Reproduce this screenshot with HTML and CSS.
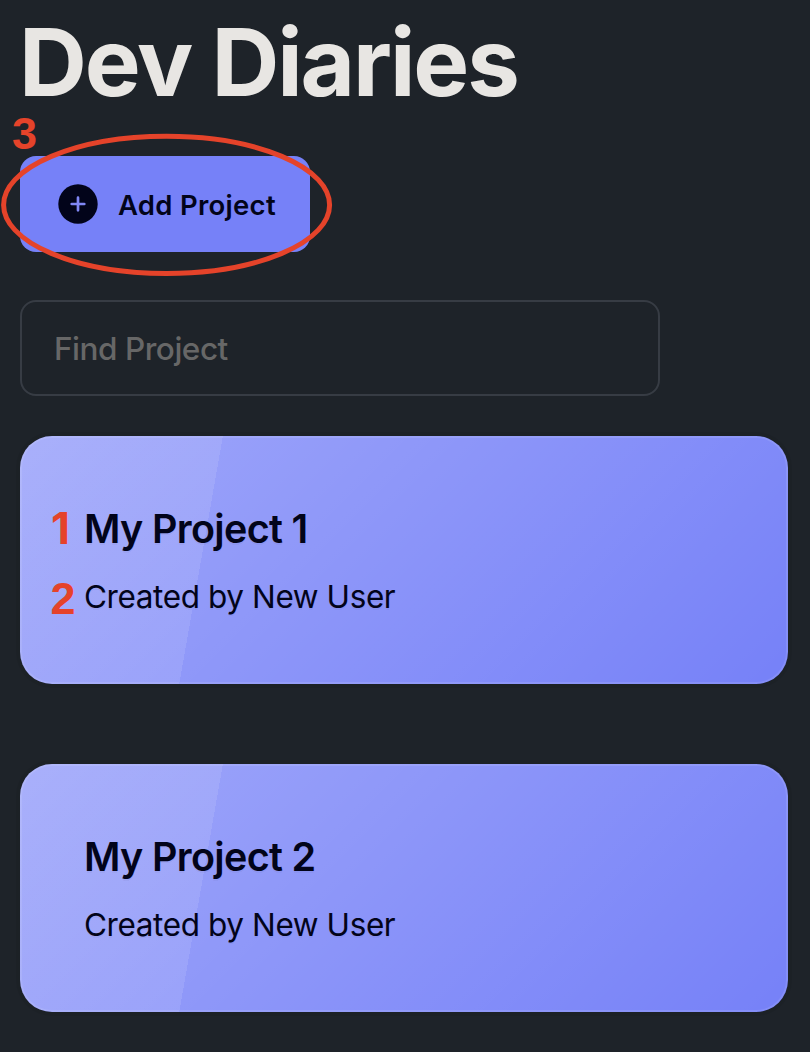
FILE: index.html
```html
<!DOCTYPE html>
<html lang="en">
<head>
<meta charset="utf-8">
<title>Dev Diaries</title>
<link rel="stylesheet" href="styles.css">
</head>
<body>
<main class="page">
  <h1 class="title">Dev Diaries</h1>
  <div class="actions">
    <button class="add-button" type="button">
      <svg class="add-icon" viewBox="0 0 40 40" aria-hidden="true">
        <circle cx="20" cy="20" r="19.7" fill="#02041a"/>
        <path d="M20 13.7v12.6M13.7 20h12.6" stroke="#8087f5" stroke-width="2.7" stroke-linecap="round"/>
      </svg>
      <span class="add-label">Add Project</span>
    </button>
    <span class="mark mark-three">3</span>
    <svg class="ring" viewBox="0 0 334 146" aria-hidden="true">
      <ellipse cx="166.6" cy="72.9" rx="163" ry="68.6" fill="none" stroke="#e5432a" stroke-width="5"/>
    </svg>
  </div>
  <input class="search" type="text" placeholder="Find Project">
  <section class="projects">
    <article class="card">
      <h2 class="card-title">My Project 1</h2>
      <p class="card-author">Created by New User</p>
      <span class="mark mark-one">1</span>
      <span class="mark mark-two">2</span>
    </article>
    <article class="card">
      <h2 class="card-title">My Project 2</h2>
      <p class="card-author">Created by New User</p>
    </article>
  </section>
</main>
</body>
</html>
```

FILE: styles.css
```css
* {
  box-sizing: border-box;
}

body {
  margin: 0;
  background: #1e2329;
  font-family: Inter, "Liberation Sans", sans-serif;
  color: #02041a;
}

.page {
  display: flex;
  flex-direction: column;
  align-items: flex-start;
  height: 1052px;
  padding: 14px 22px 0 20px;
  overflow: hidden;
}

.title {
  height: 142px;
  margin: 0 0 0 -1px;
  color: #e8e6e3;
  font-size: 94px;
  font-weight: 700;
  line-height: 96px;
  letter-spacing: -2.1px;
  white-space: nowrap;
}

.actions {
  position: relative;
  margin-bottom: 48px;
}

.add-button {
  display: flex;
  align-items: center;
  gap: 20px;
  width: 290px;
  height: 96px;
  padding: 0 0 0 38px;
  border: 0;
  border-radius: 16px;
  background: #7681f8;
  color: inherit;
  font-family: inherit;
}

.add-icon {
  flex: none;
  width: 40px;
  height: 40px;
}

.add-label {
  padding-top: 2px;
  font-size: 27.5px;
  font-weight: 600;
  line-height: 32px;
  letter-spacing: 0.28px;
  white-space: nowrap;
}

.ring {
  position: absolute;
  top: -24px;
  left: -20px;
  width: 334px;
  height: 146px;
}

.mark {
  position: absolute;
  color: #e5432a;
  font-family: "Liberation Sans", Arial, sans-serif;
  font-size: 45px;
  font-weight: 700;
  line-height: 50px;
  text-shadow: none;
}

.mark-three {
  top: -47px;
  left: -8px;
}

.mark-one {
  top: 67px;
  left: 31px;
  font-family: Inter, sans-serif;
  font-size: 44px;
}

.mark-two {
  top: 138px;
  left: 30.5px;
}

.search {
  width: 640px;
  height: 96px;
  margin-bottom: 40px;
  padding: 0 32px;
  border: 2px solid #373c44;
  border-radius: 16px;
  background: transparent;
  color: #e8e6e3;
  font-family: inherit;
  font-size: 31.5px;
  font-weight: 500;
  letter-spacing: -0.47px;
}

.search::placeholder {
  color: #676767;
  opacity: 1;
}

.projects {
  display: flex;
  flex-direction: column;
  gap: 80px;
  width: 768px;
}

.card {
  position: relative;
  height: 248px;
  padding: 65px 64px;
  border-radius: 32px;
  background-color: #7681f8;
  background-image:
    linear-gradient(135deg, rgb(255 255 255 / 30%), rgb(0 0 0 / 0%)),
    linear-gradient(100deg, rgb(255 255 255 / 10%) 25%, rgb(0 0 0 / 0%) 25%);
  box-shadow:
    inset 0 0 0 2px rgb(255 255 255 / 10%),
    0 0 0 4px rgb(0 0 0 / 5%);
  text-shadow: 0 2px rgb(0 0 0 / 5%);
}

.card-title {
  margin: 0 0 16px;
  font-size: 39.5px;
  font-weight: 600;
  line-height: 56px;
  letter-spacing: -0.67px;
  white-space: nowrap;
}

.card-author {
  margin: 0;
  font-size: 31.5px;
  line-height: 48px;
  letter-spacing: -0.4px;
  white-space: nowrap;
}
```
